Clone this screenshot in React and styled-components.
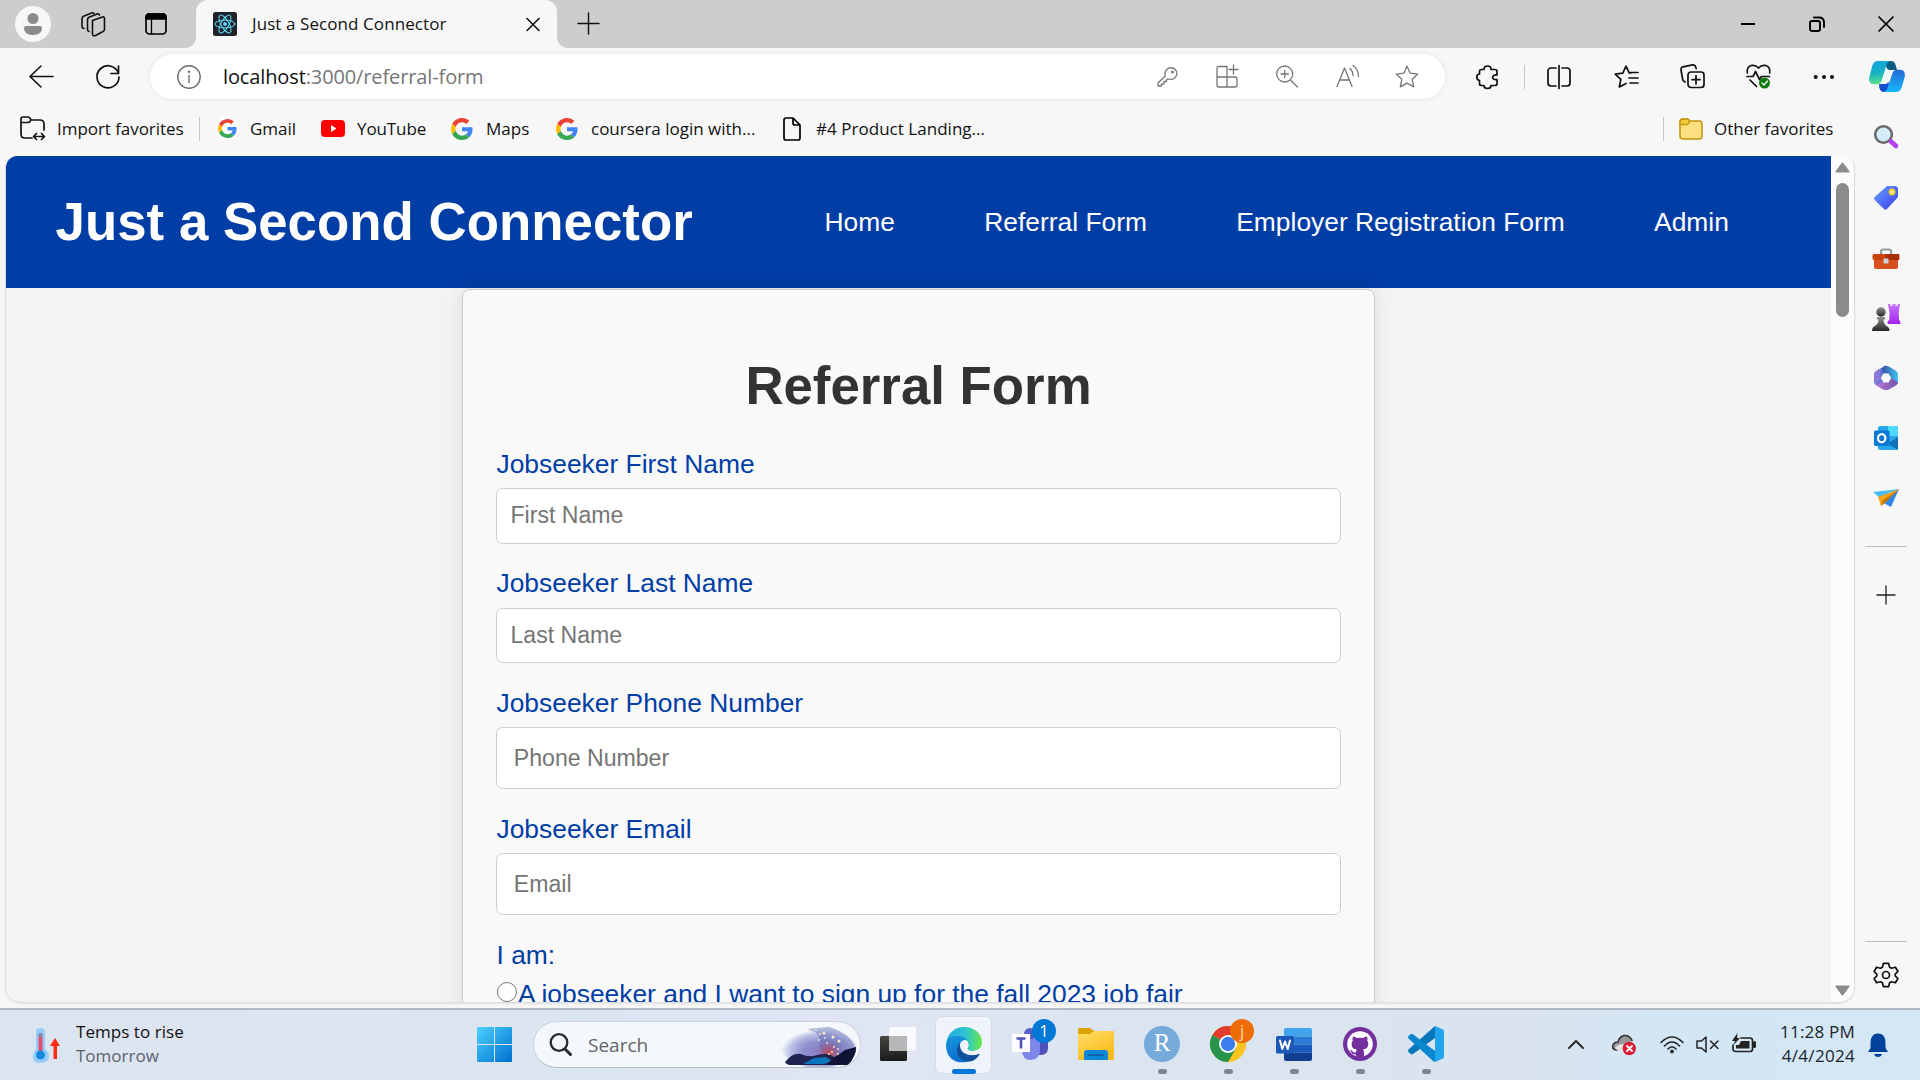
import React from 'react';
import styled, { createGlobalStyle } from 'styled-components';

const Global = createGlobalStyle`
  * { box-sizing: border-box; }
  body { margin: 0; overflow: hidden; background: #f7f7f7; }
  svg { display: block; flex: none; overflow: visible; }
`;

const ui = `'Open Sans', 'Noto Sans', sans-serif`;
const arial = `'Liberation Sans', Arial, sans-serif`;

const Screen = styled.div`
  width: 1920px; height: 1080px; display: flex; flex-direction: column;
  background: #f7f7f7; font-family: ${ui}; color: #1a1a1a; overflow: hidden;
`;
const Slot = styled.div`
  flex: none; display: flex; align-items: center; justify-content: flex-start;
  margin-left: ${p => p.$gap || 0}px; width: ${p => p.$w}px;
`;
const Label = styled.span`
  flex: none; white-space: nowrap; margin-left: ${p => p.$gap || 0}px; width: ${p => p.$w}px;
  font-size: ${p => p.$size || 17}px; letter-spacing: ${p => p.$ls || 0}px; line-height: 24px;
  color: ${p => p.$color || '#111'};
`;

/* tab strip */
const TabStrip = styled.header`
  height: 48px; flex: none; display: flex; align-items: center; background: #cdcdcd; padding-left: 15px;
`;
const Avatar = styled.div`
  width: 36px; height: 36px; border-radius: 50%; background: #f7f7f7; flex: none;
  display: flex; align-items: center; justify-content: center;
`;
const Tab = styled.div`
  position: relative; align-self: stretch; width: 361px; margin-left: 28px; padding: 0 17px 0 17px; flex: none;
  display: flex; align-items: center; background: #f7f7f7; border-radius: 12px 12px 0 0;
  &::before, &::after { content: ''; position: absolute; bottom: 0; width: 10px; height: 10px; }
  &::before { left: -10px; background: radial-gradient(circle at 0 0, transparent 9.5px, #f7f7f7 10px); }
  &::after { right: -10px; background: radial-gradient(circle at 100% 0, transparent 9.5px, #f7f7f7 10px); }
`;
const WindowControls = styled.div`
  margin-left: auto; display: flex; align-items: center; gap: 53px; padding-right: 26.5px; padding-bottom: 1px;
`;

/* toolbar */
const Toolbar = styled.div`
  height: 57px; flex: none; display: flex; align-items: center; padding-left: 29px;
`;
const AddressBar = styled.div`
  width: 1295px; height: 45px; margin-left: 30px; flex: none; border-radius: 23px; background: #fff;
  box-shadow: 0 0 5px rgba(0,0,0,.09); display: flex; align-items: center; padding-left: 27px; color: #767676;
`;
const Url = styled.span`
  margin-left: 22px; width: 934px; font-size: 20px; line-height: 28px; letter-spacing: -0.12px; color: #767676; flex: none;
  b { font-weight: 400; color: #111; }
`;
const Rule = styled.i`
  flex: none; width: 1px; height: 24px; background: #c6c6c6; margin-left: ${p => p.$gap}px;
`;
const Favorites = styled.nav`
  height: 51px; flex: none; display: flex; align-items: center; padding-left: 20px; padding-bottom: 4px;
`;

/* body */
const Middle = styled.div` height: 852px; flex: none; display: flex; padding: 0; `;
const Frame = styled.main`
  margin: 0 0 0 5px; width: 1850px; height: 847px; display: flex; flex: none;
  border: 1px solid #dedede; border-top: 0; border-radius: 12px 12px 16px 16px; overflow: hidden; background: #f3f3f3;
  box-shadow: 0 1px 2px rgba(0,0,0,.08);
`;
const Page = styled.div`
  width: 1825px; flex: none; background: #f3f3f3; overflow: hidden; font-family: ${arial}; font-size: 26.4px;
  display: flex; flex-direction: column; align-items: center;
`;
const SiteHeader = styled.div`
  height: 132px; width: 100%; flex: none; background: #003da5; color: #fff; display: flex; align-items: center; padding-left: 49.5px;
`;
const SiteTitle = styled.h1` margin: 0; width: 769px; flex: none; font-size: 52.8px; line-height: 60px; letter-spacing: 0.03px; white-space: nowrap; `;
const SiteNav = styled.ul` display: flex; gap: 89.3px; margin: 0; padding: 0; list-style: none; white-space: nowrap; `;
const Card = styled.form`
  width: 913px; flex: none; margin-top: 1px; padding: 65px 33px 0; height: 900px; background: #f9f9f9;
  border: 1px solid #ccc; border-radius: 8px; box-shadow: 0 0 16.5px rgba(0,0,0,.1);
`;
const CardTitle = styled.h2` margin: 0 0 32px; text-align: center; font-size: 52.8px; line-height: 62px; color: #333; `;
const FieldLabel = styled.label`
  display: block; height: 30px; line-height: 30px; padding-left: 0.5px; color: #003da5; white-space: nowrap;
  margin-bottom: ${p => p.$mb ?? 9}px;
`;
const Input = styled.input`
  display: block; width: 845px; height: ${p => p.$h}px; margin: 0 0 ${p => p.$mb}px;
  padding: 0 ${p => p.$pad}px ${p => p.$pb || 0}px; border: 1px solid #ccc; border-radius: 6.6px; background: #fff;
  font: 23.1px ${arial}; &::placeholder { color: #757575; opacity: 1; }
`;
const Choice = styled.label` display: flex; align-items: center; height: 30px; color: #003da5; white-space: nowrap; `;
const Radio = styled.i`
  width: 20px; height: 20px; border-radius: 50%; border: 1.65px solid #767676; background: #fff; flex: none;
  margin: 0 1px 4px 1px;
`;
const ScrollTrack = styled.div`
  flex: 1; background: #fcfcfc; display: flex; flex-direction: column; align-items: center; padding: 6px 0 6px;
`;
const Thumb = styled.div` width: 13px; flex: none; height: 134px; border-radius: 7px; background: #8b8b8b; margin: 10px 0 auto; `;
const SideBar = styled.aside`
  flex: 1; display: flex; flex-direction: column; align-items: center; margin: -35px 0 0 -1px; padding-right: 2px;
`;
const SideIcon = styled.div`
  height: 28px; flex: none; display: flex; align-items: center; justify-content: center; margin-top: ${p => p.$gap}px;
`;
const SideRule = styled.i` width: 42px; height: 1px; flex: none; background: #bdbdbd; margin-top: ${p => p.$gap}px; `;

/* taskbar */
const Taskbar = styled.footer`
  height: 72px; flex: none; border-top: 2px solid #b1b9c2; display: flex; align-items: center; padding-left: 33px; padding-bottom: 1px;
  background: linear-gradient(90deg, #dae5f0 0%, #dfe4f1 17%, #dbe5f0 30%, #e0e5f3 45%, #dae5f0 60%, #d9e4f0 80%, #d2e6f5 88%, #d3e7f5 100%);
`;
const Stack = styled.div`
  display: flex; flex-direction: column; flex: none; margin-left: ${p => p.$gap}px; width: ${p => p.$w}px;
  align-items: ${p => p.$align || 'flex-start'}; padding-bottom: 2px;
`;
const SearchPill = styled.div`
  width: 328px; height: 47px; margin-left: 21px; flex: none; border-radius: 24px; background: #f4f8fc;
  border: 1.5px solid #cbd3e2; border-bottom-color: #b6bfcb; display: flex; align-items: center; padding-left: 15px; overflow: hidden;
`;
const TaskItem = styled.div`
  position: relative; width: ${p => p.$w || 36}px; height: 70px; margin-left: ${p => p.$gap}px; flex: none;
  display: flex; align-items: center; justify-content: center; padding-bottom: 1px;
  &::after {
    content: ''; display: ${p => (p.$open ? 'block' : 'none')}; position: absolute; bottom: 6px; left: calc(50% - ${p => (p.$active ? 12 : 4.5)}px);
    width: ${p => (p.$active ? 24 : 9)}px; height: 5px; border-radius: 3px; background: ${p => (p.$active ? '#0078d7' : '#7e858d')};
  }
`;
const ActiveTile = styled.div`
  width: 57px; height: 58px; border-radius: 7px; background: #eff4fb; border: 1px solid #d3dce8; display: flex;
  align-items: center; justify-content: center; margin-bottom: -2px; flex: none;
`;
const Badge = styled.b`
  position: absolute; top: 9px; right: ${p => p.$right}px; width: 24px; height: 24px; border-radius: 50%;
  background: ${p => p.$bg}; color: ${p => p.$fg}; font: 400 16.5px/23px ${ui}; text-align: center;
`;
const RCircle = styled.div`
  width: 36px; height: 36px; border-radius: 50%; background: #75aadb; color: #fff; text-align: center;
  font: 25px/34px 'Liberation Serif', serif;
`;

const S = ({ w = 24, h = w, vb, sw = 1.7, children, ...r }) => (
  <svg width={w} height={h} viewBox={vb || `0 0 ${w} ${h}`} fill="none" stroke="currentColor" strokeWidth={sw} strokeLinecap="round" strokeLinejoin="round" {...r}>{children}</svg>
);
const Google = ({ w = 22 }) => (
  <S w={w} vb="0 0 48 48" stroke="none">
    <path fill="#EA4335" d="M24 9.5c3.54 0 6.71 1.22 9.21 3.6l6.85-6.85C35.9 2.38 30.47 0 24 0 14.62 0 6.51 5.38 2.56 13.22l7.98 6.19C12.43 13.72 17.74 9.5 24 9.5z" />
    <path fill="#4285F4" d="M46.98 24.55c0-1.57-.15-3.09-.38-4.55H24v9.02h12.94c-.58 2.96-2.26 5.48-4.78 7.18l7.73 6c4.51-4.18 7.09-10.36 7.09-17.65z" />
    <path fill="#FBBC05" d="M10.53 28.59c-.48-1.45-.76-2.99-.76-4.59s.27-3.14.76-4.59l-7.98-6.19C.92 16.46 0 20.12 0 24c0 3.88.92 7.54 2.56 10.78l7.97-6.19z" />
    <path fill="#34A853" d="M24 48c6.48 0 11.93-2.13 15.89-5.81l-7.73-6c-2.15 1.45-4.92 2.3-8.16 2.3-6.26 0-11.57-4.22-13.47-9.91l-7.98 6.19C6.51 42.62 14.62 48 24 48z" />
  </S>
);
const GmailDot = styled.div` width: 24px; height: 24px; border-radius: 50%; background: #fff; display: flex; align-items: center; justify-content: center; `;

const ReactTab = () => (
  <S w={24} stroke="#61dafb" sw={1}>
    <rect width="24" height="24" rx="2.5" fill="#20232a" stroke="none" />
    <circle cx="12" cy="12" r="1.9" fill="#61dafb" stroke="none" />
    {[0, 60, 120].map(a => <ellipse key={a} cx="12" cy="12" rx="10" ry="3.9" transform={`rotate(${a} 12 12)`} />)}
  </S>
);
const Star = 'M12 1.2l3.2 7 7.6.9-5.6 5.2 1.5 7.6-6.7-3.8-6.7 3.8 1.5-7.6L1.2 9.1l7.6-.9z';

const Copilot = () => (
  <S w={36} h={32} stroke="none">
    <defs>
      <linearGradient id="c1" x1="0" y1="0" x2=".1" y2="1"><stop stopColor="#12a5e0" /><stop offset=".55" stopColor="#17b3c4" /><stop offset="1" stopColor="#58e08c" /></linearGradient>
      <linearGradient id="c2" x1="0" y1="1" x2="0" y2="0"><stop stopColor="#14b9fb" /><stop offset="1" stopColor="#2469d4" /></linearGradient>
    </defs>
    <path d="M16 0h6c2.500 0 3.800 1.400 4.600 4l1.400 5h-6c-3 0-5-2-5-5z" fill="#0a5b80" />
    <path d="M10 23h7l3-2c0 4-1 10-5 10-3 0-4-2-4.800-4.500z" fill="#1550d0" />
    <path d="M9 0h13c-3 0-4.200 2.500-5 5.500L13.500 17c-1.300 4.500-2.500 6.300-6 6.300H5c-4 0-5.600-3-4.600-7.500L3.200 5C4.200 1.800 6 0 9 0z" fill="url(#c1)" />
    <path d="M27 31H14c3 0 4.200-2.500 5-5.500L22.500 15c1.300-4.500 2.500-6.300 6-6.300H31c4 0 5.600 3 4.600 7.500L32.800 26c-1 3.200-2.800 5-5.800 5z" fill="url(#c2)" />
  </S>
);
const sideIcons = [
  [2, <S key="s" w={26} h={26} stroke="none"><circle cx="10.5" cy="10.500" r="8.300" fill="#d5edfb" stroke="#6b6b6b" strokeWidth="2.600" /><path d="M18 17.500l5 4.500" stroke="#b63cf5" strokeWidth="4.600" /></S>],
  [33, <S key="t" w={26} h={26} stroke="none"><defs><linearGradient id="tg" x1="0" x2="1" y1="0" y2="1"><stop stopColor="#66a7ff" /><stop offset="1" stopColor="#3d35ed" /></linearGradient></defs><path d="M14 1h9l2 2v9L14 24q-1.500 1.500-3 0L1.700 15q-1.500-1.500 0-3z" fill="url(#tg)" /><circle cx="19" cy="7" r="2.500" stroke="#f7cf18" strokeWidth="1.800" fill="#f8f3d0" /></S>],
  [33, <S key="b" w={28} h={22} stroke="none"><path d="M9 7V3.500Q9 1.500 11 1.500h6q2 0 2 2V7" stroke="#999" strokeWidth="2.200" /><path d="M2 10h24v9q0 2-2 2H4q-2 0-2-2z" fill="#d8501b" /><rect x=".5" y="6" width="27" height="6" rx="1.500" fill="#cb420e" /><path d="M14 6h13v6H14z" fill="#a92f08" /><rect x="11.500" y="10.500" width="5" height="5" rx="1" fill="#cbd4d8" /></S>],
  [31, <S key="c" w={28} h={28} stroke="none"><defs><linearGradient id="pg" y1="0" y2="1" x2="0"><stop stopColor="#c773ff" /><stop offset="1" stopColor="#a324ee" /></linearGradient><linearGradient id="kg" y1="0" y2="1" x2="0"><stop stopColor="#909090" /><stop offset="1" stopColor="#262626" /></linearGradient></defs><path d="M16 0h2.500v2h2V0h3v2h2V0H28l-1.300 8.500L27 16q1.500.5 1.500 4H15.500q0-3.500 1.700-4l.4-6.500z" fill="url(#pg)" /><circle cx="9" cy="8" r="4.700" fill="url(#kg)" /><path d="M5 13h8v2.500h-1.500q0 4 3 6.500 3 1 3 5H0q0-4 3-5 3.500-2.500 3.500-6.500H5z" fill="url(#kg)" /></S>],
  [32, <S key="m" w={26} h={26} stroke="none"><defs><linearGradient id="mg"><stop stopColor="#34519e" /><stop offset="1" stopColor="#40c4f5" /></linearGradient><linearGradient id="mh"><stop stopColor="#b679db" /><stop offset="1" stopColor="#7450a5" /></linearGradient></defs><path d="M13 0.500q1.500 0 3.300 1.500l6.200 3.700Q25 7 25 10v6q0 3-2.500 4.500L16 24.300q-3 1.500-6 0L3.500 20.500Q1 19 1 16v-6q0-3 2.500-4.300L10 2q1.500-1.500 3-1.500z" fill="#6078d2" /><path d="M10 2q3-2 6.300 0l6.200 3.700Q25 7 25 10v7.500L17.500 13 15 8.500h-5L9 4z" fill="url(#mg)" /><path d="M3 20l6.500-3.500L16 18l2-5 7 4.500q-.5 2-2.500 3L16 24.300q-3 1.500-6 0z" fill="url(#mh)" /><path d="M1 10q0-3 2.500-4.300L8 3.200Q6.500 6 7 10l1 3.500L3 20q-2-1.500-2-4z" fill="#8a7ad6" /><path d="M10.500 8.500h5l2.700 4.500-2.700 4.500h-5L7.800 13z" fill="#fff" /></S>],
  [32, <S key="o" w={24} h={24} stroke="none"><path d="M6 0h16q2 0 2 2v20q0 2-2 2H6q-2 0-2-2V2q0-2 2-2z" fill="#28a8ea" /><path d="M14 0h8q2 0 2 2v8H14z" fill="#50d9ff" /><path d="M4 12l20 12V11l-11 7z" fill="#1070b8" /><rect y="4.500" width="15.500" height="15.500" rx="1.500" fill="#0a78d4" /><ellipse cx="7.700" cy="12.200" rx="3.700" ry="4" stroke="#fff" strokeWidth="2.200" /></S>],
  [32, <S key="p" w={26} h={20} stroke="none"><path d="M0 4L26 1 7 10z" fill="#46bdf5" /><path d="M26 1L18 19 9 14z" fill="#2b87e8" /><path d="M5 9L26 1 8 18z" fill="#f6a51d" /><path d="M8 18l2-6L26 1 13 14z" fill="#c77807" /></S>],
];

const links = ['Home', 'Referral Form', 'Employer Registration Form', 'Admin'];

export default function App() {
  return (
    <>
      <Global />
      <Screen>
        <TabStrip>
          <Avatar><S w={18} h={22} stroke="none" fill="#8b8b8b"><circle cx="9" cy="5.500" r="5.500" /><path d="M2 13h14q2 0 2 2 0 7-9 7t-9-7q0-2 2-2z" /></S></Avatar>
          <Slot $gap={30} $w={24}>
            <S w={24} sw={1.600} stroke="#111"><path d="M12 8.500l10-3.500q2-.5 2 1.500v10.500q0 1.500-1 2.200l-8 4.300q-3 1-3-1.500z" transform="translate(-.5)" /><path d="M8 19.500q-1.500-.3-1.500-2V8q0-2 1.500-2.700l8-3.300q2-.6 2.400 1" /><path d="M3 16.500q-2-.3-2-2V7q0-2 1.500-2.700L10.500 1q2-.6 2.400.5" /></S>
          </Slot>
          <Slot $gap={40} $w={23}>
            <S w={22} stroke="#000"><rect x="1" y="1" width="20" height="20" rx="3.500" /><path d="M1 6V4q0-3 3-3h14q3 0 3 3v2z" fill="#000" /><path d="M6.500 6v15" strokeWidth="1.300" /></S>
          </Slot>
          <Tab>
            <ReactTab />
            <Label $gap={15} $w={274} $size={17} $ls={0.08}>Just a Second Connector</Label>
            <S w={14} stroke="#111" sw={1.600}><path d="M1 1.500l12 12M13 1.500L1 13.500" /></S>
          </Tab>
          <Slot $gap={21} $w={22}><S w={22} stroke="#111" sw={1.400}><path d="M10.500 .5v21M0 11h21" transform="translate(0 -.5)" /></S></Slot>
          <WindowControls>
            <S w={16} stroke="#000" sw={2}><path d="M1 8h14" strokeLinecap="butt" /></S>
            <S w={16} stroke="#000" sw={1.900}><rect x="1" y="5" width="10" height="10" rx="2" /><path d="M5 1.500h5q5 0 5 5V11" /></S>
            <S w={16} stroke="#000" sw={1.700}><path d="M1 1l14 14M15 1L1 15" /></S>
          </WindowControls>
        </TabStrip>

        <Toolbar>
          <S w={24} sw={1.600} stroke="#111"><path d="M12 1L1 11.500 12 22M1 11.500h23" /></S>
          <Slot $gap={43} $w={24}><S w={24} stroke="#111"><path d="M22.500 8.500A11 11 0 1 0 23 12M22.500 1v7.500H15" /></S></Slot>
          <AddressBar>
            <S w={24} sw={1.400} stroke="#707070"><circle cx="12" cy="12" r="11.200" /><path d="M12 10.500v7" /><circle cx="12" cy="6.800" r=".6" /></S>
            <Url><b>localhost</b>:3000/referral-form</Url>
            <S w={21} h={20} sw={1.300}><path d="M20 7a6 6 0 0 0-12-.5q-.2 1 .2 2.500L1 16v3h3.500v-2H7v-2.500h2.500V13l1.500-1q7 2 9-5z" /><circle cx="15.500" cy="5" r=".9" /></S>
            <Slot $gap={38} $w={23}><S w={23} sw={1.300}><path d="M11 1.500H3q-2 0-2 2V20q0 2 2 2h16q2 0 2-2v-6q0-2-2-2H1M11 1.500V22M17.500 0v9M13 4.500h9" /></S></Slot>
            <Slot $gap={37} $w={23}><S w={23} sw={1.300}><circle cx="8.700" cy="9" r="8" /><path d="M14.500 15l7 7M8.700 5.300v7.400M5 9h7.400" /></S></Slot>
            <Slot $gap={37} $w={24}><S w={24} sw={1.300}><path d="M1 21.500L8.500 3 16 21.500M4 15h9M14 3.500q3 2.500 3 7M17 .5q5.500 4 5.500 11" /></S></Slot>
            <Slot $gap={35} $w={24}><S w={24} sw={1.300}><path d={Star} /></S></Slot>
          </AddressBar>
          <Slot $gap={31} $w={24}><S w={24} stroke="#111"><path d="M8 4.500q0-3.500 3.500-3.500T15 4.500h4q2 0 2 2V10q-3.500-.5-4.500 2 0 3 4.500 2.500v4q0 2-2 2h-4q0 3-3.500 3T8 20.500H5.500q-2 0-2-2v-3Q.8 15 .8 12t2.700-3V6.500q0-2 2-2z" /></S></Slot>
          <Rule $gap={24} />
          <Slot $gap={22} $w={24}><S w={24} stroke="#111"><path d="M9 3H4Q1 3 1 6v12q0 3 3 3h5M12 .5v23M15 3h5q3 0 3 3v12q0 3-3 3h-5" /></S></Slot>
          <Slot $gap={43} $w={25}><S w={25} h={24} stroke="#111"><path d="M17 8l-1.800-.2L12 1.200 8.800 8.200 1.200 9.100l5.600 5.200-1.500 7.600L12 18.500M16.500 7.500H24M15 13h9M16 18h8" /></S></Slot>
          <Slot $gap={41} $w={25}><S w={25} stroke="#111"><rect x="8" y="8" width="16" height="15.500" rx="3" /><path d="M16 11.500v8.500M12 15.700h8M5 18q-2-1-2.300-2.500L1 6q-.2-2.500 2-3.200L12.500.8q2-.2 2.700 1.200l1 2.500" /></S></Slot>
          <Slot $gap={41} $w={25}><S w={25} stroke="#111"><path d="M1.300 9Q.5 3 5 1.500 9.500.5 12.500 4 15.500.5 20 1.500 24.500 3 23.700 9M1 12.500h6l2.500-5 4 8 2-3h8M4 16l6.500 6.500" /><circle cx="18.500" cy="19" r="5.500" fill="#107c10" stroke="none" /><path d="M16 19l2 2 3.500-4" stroke="#fff" strokeWidth="1.200" /></S></Slot>
          <Slot $gap={42} $w={22}><S w={22} h={6} stroke="none" fill="#111"><circle cx="2.700" cy="3" r="2" /><circle cx="11" cy="3" r="2" /><circle cx="19" cy="3" r="2" /></S></Slot>
          <Slot $gap={34} $w={36}><Copilot /></Slot>
        </Toolbar>

        <Favorites>
          <S w={25} stroke="#111"><path d="M12 22H5q-4 0-4-4V3q0-2 2-2h5q2 0 3 3h9q4 0 4 4v6M1 6.500h7q2 0 3-2.500M14 20.500h10M16.500 17.500l-3 3 3 3M21.500 17.500l3 3-3 3" /></S>
          <Label $gap={12} $w={126} $ls={-0.05}>Import favorites</Label>
          <Rule $gap={16} />
          <Slot $gap={15} $w={24}><GmailDot><Google w={19} /></GmailDot></Slot>
          <Label $gap={11} $w={47}>Gmail</Label>
          <Slot $gap={24} $w={24}><S w={24} h={17} stroke="none"><rect width="24" height="17" rx="4" fill="#f00" /><path d="M10 5v7l5.500-3.500z" fill="#fff" /></S></Slot>
          <Label $gap={12} $w={69} $ls={-0.1}>YouTube</Label>
          <Slot $gap={25} $w={22}><Google /></Slot>
          <Label $gap={13} $w={44}>Maps</Label>
          <Slot $gap={26} $w={22}><Google /></Slot>
          <Label $gap={13} $w={165}>coursera login with...</Label>
          <Slot $gap={27} $w={18}><S w={18} h={24} stroke="#000"><path d="M10 1H3Q1 1 1 3v18q0 2 2 2h12q2 0 2-2V8zM10 1v5q0 2 2 2h5" /></S></Slot>
          <Label $gap={15} $w={170} $ls={0.03}>#4 Product Landing...</Label>
          <Rule $gap={677} />
          <Slot $gap={15} $w={24}><S w={24} h={22} stroke="#c3940c" sw={1.500}><path d="M1 4q0-3 3-3h4q2 0 2.500 2H20q3 0 3 3v12q0 3-3 3H4q-3 0-3-3z" fill="#ffdf80" /><path d="M1 6.500h6q3 0 3.500-3.500-.5-2-2.500-2H4Q1 1 1 4z" fill="#f5c73b" /></S></Slot>
          <Label $gap={11} $w={120}>Other favorites</Label>
        </Favorites>

        <Middle>
          <Frame>
            <Page>
              <SiteHeader>
                <SiteTitle>Just a Second Connector</SiteTitle>
                <SiteNav>{links.map(l => <li key={l}>{l}</li>)}</SiteNav>
              </SiteHeader>
              <Card>
                <CardTitle>Referral Form</CardTitle>
                <FieldLabel>Jobseeker First Name</FieldLabel>
                <Input $h={56} $pad={13.5} $pb={2} $mb={24} placeholder="First Name" />
                <FieldLabel $mb={10}>Jobseeker Last Name</FieldLabel>
                <Input $h={55} $pad={13.5} $mb={25} placeholder="Last Name" />
                <FieldLabel>Jobseeker Phone Number</FieldLabel>
                <Input $h={62} $pad={16.8} $mb={25} placeholder="Phone Number" />
                <FieldLabel>Jobseeker Email</FieldLabel>
                <Input $h={62} $pad={16.8} $mb={25} placeholder="Email" />
                <FieldLabel>I am:</FieldLabel>
                <Choice><Radio />A jobseeker and I want to sign up for the fall 2023 job fair</Choice>
              </Card>
            </Page>
            <ScrollTrack>
              <S w={15} h={11} stroke="#8b8b8b" fill="#8b8b8b" sw={2}><path d="M7.500 1.500L1.500 9.500h12z" /></S>
              <Thumb />
              <S w={15} h={11} stroke="#8b8b8b" fill="#8b8b8b" sw={2}><path d="M7.500 9.500L1.500 1.500h12z" /></S>
            </ScrollTrack>
          </Frame>
          <SideBar>
            {sideIcons.map(([gap, icon], i) => <SideIcon key={i} $gap={gap}>{icon}</SideIcon>)}
            <SideRule $gap={34} />
            <SideIcon $gap={34}><S w={18} stroke="#222" sw={1.300}><path d="M9 0v18M0 9h18" /></S></SideIcon>
            <SideRule $gap={332} />
            <SideIcon $gap={19}><S w={26} h={26} vb="-13 -13 26 26" stroke="#111" sw={1.700}><circle r="3.500" /><path d="M-2.600-11.600h5.200l1 3.800 2 1.100 3.800-1.100 2.500 4.300-2.700 2.700v1.600l2.700 2.700-2.500 4.300-3.800-1.100-2 1.100-1 3.800h-5.200l-1-3.800-2-1.100-3.800 1.100-2.500-4.300 2.700-2.700v-1.600l-2.700-2.700 2.500-4.300 3.800 1.100 2-1.100z" /></S></SideIcon>
          </SideBar>
        </Middle>

        <Taskbar>
          <S w={27} h={36} stroke="none"><path d="M3 5q0-4 4.500-4T12 5v17q4 3 4 7 0 7-8.500 7T0 29q0-4 3-7z" fill="#96ccf9" /><path d="M5.500 8q0-2 2-2t2 2v17h-4z" fill="#e5506d" /><path d="M5.500 8q0-2 2-2t2 2v2h-4z" fill="#7690ad" /><circle cx="7.500" cy="28" r="4.500" fill="#148bdc" /><path d="M20.500 19L17 19l5-8 5 8h-3v13h-3.500z" fill="#ff2a12" /></S>
          <Stack $gap={16} $w={401}>
            <Label $size={17} $w={108} $ls={0.05}>Temps to rise</Label>
            <Label $size={17} $w={84} $color="#5c626c">Tomorrow</Label>
          </Stack>
          <S w={35} stroke="none"><defs><linearGradient id="wg" x2="1" y2="1"><stop stopColor="#4bd1ff" /><stop offset="1" stopColor="#0070ce" /></linearGradient></defs><path d="M1 0h16v17H0V1q0-1 1-1zM18 0h16q1 0 1 1v16H18zM0 18h17v17H1q-1 0-1-1zM18 18h17v16q0 1-1 1H18z" fill="url(#wg)" /></S>
          <SearchPill>
            <S w={23} stroke="#2a2a2a" sw={2.300}><circle cx="10" cy="9.500" r="8.300" /><path d="M16 16l5.500 5.500" strokeWidth="3" /></S>
            <Label $gap={16} $w={193} $size={19} $color="#646464">Search</Label>
            <S w={76} h={40} stroke="none">
              <defs>
                <radialGradient id="nebula" cx=".52" cy=".6" r=".52"><stop stopColor="#8d7cc4" /><stop offset=".45" stopColor="#8f90cf" /><stop offset=".75" stopColor="#b6bce3" /><stop offset="1" stopColor="#f4f8fc" /></radialGradient>
                <radialGradient id="glow"><stop stopColor="#c9474c" /><stop offset="1" stopColor="#a0588f" stopOpacity="0" /></radialGradient>
              </defs>
              <ellipse cx="38" cy="22" rx="38" ry="21" fill="url(#nebula)" />
              <path d="M26 4q16 4 12 16 2 8 8 11h20l8-10Q68 8 48 2z" fill="#5961ae" opacity=".45" />
              <circle cx="48" cy="28" r="13" fill="url(#glow)" />
              <path d="M4 37q8-10 16-8 8 4 16 1 11-3 17 2l22-10q0 9-8 18H8q-3-1-4-3z" fill="#20224f" />
              <path d="M22 39l11-6 11-1 8 4-9 3z" fill="#0a74bd" />
              <path d="M50 35l14-10 11-3q0 9-8 18H45z" fill="#101333" />
              <g fill="#ffe9cc">{[[28, 6], [35, 5], [39, 9], [44, 13], [52, 12], [46, 18], [38, 15], [53, 22], [58, 16], [51, 27], [57, 29], [48, 29], [43, 8], [57, 24]].map(([x, y], i) => <circle key={i} cx={x} cy={y} r={i % 4 === 0 ? 1.500 : 0.900} />)}</g>
            </S>
          </SearchPill>
          <TaskItem $gap={19}><S w={36} h={35} stroke="none"><defs><linearGradient id="dk" x2="0" y2="1"><stop stopColor="#444440" /><stop offset="1" stopColor="#1b1b1b" /></linearGradient></defs><rect y="9" width="27" height="25" rx="1.500" fill="url(#dk)" /><rect x="9" width="27" height="24" rx="1.500" fill="#fff" opacity=".8" /><path d="M9 9h18v15H9z" fill="#b7b7b7" /></S></TaskItem>
          <TaskItem $gap={19} $w={57} $open $active>
            <ActiveTile><S w={36} stroke="none" vb="0 0 36 36">
              <defs><linearGradient id="e1" x2="1"><stop stopColor="#28a9e8" /><stop offset=".55" stopColor="#2cc4cf" /><stop offset="1" stopColor="#6ae847" /></linearGradient><linearGradient id="e2" x2="0" y2="1"><stop stopColor="#1694da" /><stop offset="1" stopColor="#0c6fd0" /></linearGradient></defs>
              <path d="M0.500 15C2 6 9 0 18 0c11 0 18 7 18 15 0 6-4 9-9 9-5 0-6.500-1.500-5.300-3 1.500-2.500 1-7-3.200-8.500C12 8 4 9 .5 15z" fill="url(#e1)" />
              <path d="M0 18C0 12 5 9 11 9c5 0 9 2 10.500 5-3.500-1.500-8 1-8 6 0 7 5 12 12 13C17 38 0 36 0 18z" fill="url(#e2)" />
              <path d="M14.500 15.500C10 19 9.500 26 14 31c5 5 14 5.500 19.500-3.500.3-.8-.2-1-.8-.7-5 2.200-11.500 1.500-15.200-2.300-2.500-2.500-3.500-6-3-9z" fill="#10509a" />
              <path d="M21.700 21c1.500-2.500 1-6.500-2-8-3-.5-6.200 2.500-5.700 6.500.5 3.500 2.500 5.500 4.500 6.800 4.500 2.700 10.500 2.200 14.200.5.600-3 1.500-5 2-6.500-2.500 3.200-5.200 3.700-7.700 3.700-5 0-6.500-1.500-5.300-3z" fill="#eff4fb" />
            </S></ActiveTile>
          </TaskItem>
          <TaskItem $gap={20} $w={45}><S w={45} h={36} stroke="none"><circle cx="18" cy="8" r="6" fill="#5b60c6" /><path d="M24 14h12v8q0 7-7 7h-5z" fill="#4e52b8" /><path d="M10 13h18v10q0 11-9 11t-9-10z" fill="#7f86ec" /><rect y="8" width="18" height="18" fill="#fff" /><path d="M4.500 12.500h9M9 12.500V22.500" stroke="#4f52b5" strokeWidth="2.600" strokeLinecap="butt" /></S><Badge $right={1} $bg="#0078d7" $fg="#fff">1</Badge></TaskItem>
          <TaskItem $gap={21}><S w={36} h={32} stroke="none"><defs><linearGradient id="fg" x2=".6" y2="1"><stop stopColor="#ffdf6a" /><stop offset="1" stopColor="#fbb917" /></linearGradient></defs><path d="M0 1q0-1 1-1h11l4 3h19q1 0 1 1v8H0z" fill="#dfa207" /><path d="M0 6h12l4-3h19q1 0 1 1v28H0z" fill="url(#fg)" /><path d="M6 32v-7q0-3 3-3h18q3 0 3 3v7z" fill="#0d86d8" /><path d="M11 27h14" stroke="#0b5a9f" strokeWidth="1.500" /></S></TaskItem>
          <TaskItem $gap={30} $open><RCircle>R</RCircle></TaskItem>
          <TaskItem $gap={30} $open><S w={36} stroke="none"><circle cx="18" cy="18" r="18" fill="#fcc31e" /><path d="M18 18L2.400 9A18 18 0 0 1 33.600 9H18z" fill="#e33b2e" /><path d="M2.400 9A18 18 0 0 0 18 36l8-13.500L18 18z" fill="#27944b" /><circle cx="18" cy="18" r="9" fill="#fff" /><circle cx="18" cy="18" r="7.200" fill="#3b7ded" /></S><Badge $right={-8} $bg="#ee6c05" $fg="#f9d4b5">j</Badge></TaskItem>
          <TaskItem $gap={30} $open><S w={36} h={33} stroke="none"><path d="M10 0h24q2 0 2 2v6.500H8V2q0-2 2-2z" fill="#41a5ee" /><path d="M8 8.500h28v8H8z" fill="#2b7cd3" /><path d="M8 16.500h28v8H8z" fill="#185abd" /><path d="M8 24.500h28V31q0 2-2 2H10q-2 0-2-2z" fill="#103f91" /><rect y="8" width="18" height="17.500" rx="1.500" fill="#1b58b8" /><path d="M4 12.500l2.300 8.500L9 13.500l2.700 7.500L14 12.500" stroke="#fff" strokeWidth="2" /></S></TaskItem>
          <TaskItem $gap={30} $open><S w={34} vb="0 0 34 34" stroke="none"><circle cx="17" cy="17" r="17" fill="#74309d" /><circle cx="17" cy="17" r="12.800" fill="#fff" /><path d="M10 9.500q2-.3 4 1.500 3-.7 6 0 2-1.800 4-1.500.8 2 .3 4Q26 16 25 19q-1 3-5 3.500 1 1.500 1 3v4q-4 1-8 0v-2q-4 .5-5-3l-1.500-1.500q3-.5 3.500 2 1.300 1 3 .3 0-1.500.8-2.800Q9.500 22 8.800 19q-.8-3 .9-5.500-.5-2 .3-4z" fill="#74309d" /></S></TaskItem>
          <TaskItem $gap={30} $open><S w={36} stroke="none"><path d="M27 0v12L5 28q-1.500.8-2.700-.3L.5 26q-1-1.300 0-2.500z" fill="#0877b9" /><path d="M.5 12.500q-1-1.300 0-2.500l1.800-1.700Q3.500 7.500 5 8.300L27 25v11L25 35z" fill="#0a87cd" /><path d="M27 0l8 3.500q1 .5 1 2v25q0 1.500-1 2L27 36z" fill="#22a5ef" /></S></TaskItem>
          <Slot $gap={124} $w={16}><S w={16} h={9} stroke="#222" sw={1.800}><path d="M1 8l7-7 7 7" /></S></Slot>
          <Slot $gap={28} $w={24}><S w={24} h={21} stroke="none"><path d="M5 16Q0 16 .8 11.500 2 8 6 8q1-5 6-6.500 6-.5 8 5" fill="#999" stroke="#333" strokeWidth="1.600" /><path d="M3 14q3-4 8-4l4 6H5z" fill="#e1e1e1" /><circle cx="17.300" cy="14.500" r="6.700" fill="#d91f35" /><path d="M15 12l5 5M20 12l-5 5" stroke="#fff" strokeWidth="1.800" /></S></Slot>
          <Slot $gap={24} $w={24}><S w={24} h={18} stroke="#222" sw={1.600}><path d="M1 6.500Q12-4.500 23 6.500M4.500 10Q12 2 19.500 10M8 13q4-4.500 8 0" /><circle cx="12" cy="15.500" r="1.500" fill="#222" strokeWidth="1" /></S></Slot>
          <Slot $gap={12} $w={23}><S w={23} h={17} stroke="#222" sw={1.500}><path d="M10 1L5.500 5H1v7h4.500L10 16zM14.500 5l7.500 7.500M22 5l-7.500 7.500" /></S></Slot>
          <Slot $gap={13} $w={24}><S w={24} h={19} stroke="#222" sw={1.700}><path d="M9 3h9q2.500 0 2.500 2.500v8.500q0 2.500-2.500 2.500H4Q1 16.500 1 14v-4" /><path d="M9 6h8.500v7.500H4V10h3z" fill="#222" stroke="none" /><path d="M5.500-2L0 6h3l-1.500 4L8 3H5z" fill="#222" stroke="none" /><path d="M22.500 7.500v4" strokeWidth="3" /></S></Slot>
          <Stack $gap={24} $w={75} $align="flex-end">
            <Label $size={17} $ls={0.2} $color="#20242a">11:28 PM</Label>
            <Label $size={17} $ls={0.3} $color="#20242a">4/4/2024</Label>
          </Stack>
          <Slot $gap={13} $w={20}><S w={20} h={24} stroke="none" fill="#00419b"><path d="M2.500 10q0-9.500 7.500-9.500t7.500 9.500v5l2.500 4H0l2.500-4zM6 21h8q-1 3-4 3t-4-3z" /></S></Slot>
        </Taskbar>
      </Screen>
    </>
  );
}
